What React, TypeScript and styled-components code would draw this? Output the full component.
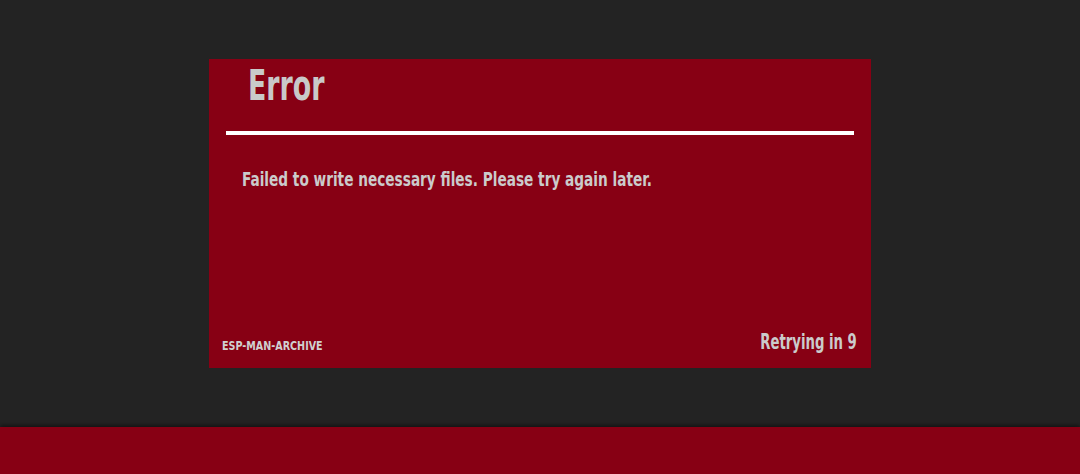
import React from "react";
import styled, { createGlobalStyle } from "styled-components";

const Global = createGlobalStyle`
  html, body { margin: 0; padding: 0; background: #232323; }
  body { font-family: "DejaVu Sans Condensed", "DejaVu Sans", "Liberation Sans", sans-serif; }
`;

const Page = styled.div`
  width: 1080px;
  height: 474px;
  display: flex;
  flex-direction: column;
  align-items: center;
  overflow: hidden;
`;

const Panel = styled.section`
  margin-top: 59px;
  width: 662px;
  height: 309px;
  background: #870014;
  display: flex;
  flex-direction: column;
  box-sizing: border-box;
  padding: 0 17px 14px;
`;

const Squeeze = styled.span<{ $x: number; $origin?: string }>`
  display: inline-block;
  white-space: nowrap;
  transform: scaleX(${(p) => p.$x});
  transform-origin: ${(p) => p.$origin ?? "left"} center;
`;

const Title = styled.h1`
  margin: 0;
  padding: 3px 0 0 22px;
  height: 66px;
  box-sizing: border-box;
  font-size: 42px;
  line-height: 48px;
  font-weight: 700;
  color: #c9c9c9;
`;

const Rule = styled.hr`
  margin: 6px 0 0;
  border: 0;
  height: 4px;
  background: #ffffff;
`;

const Message = styled.p`
  margin: 32px 0 0 16px;
  font-size: 19px;
  line-height: 24px;
  font-weight: 700;
  color: #cbcbcb;
  flex: 1;
`;

const Footer = styled.footer`
  display: flex;
  justify-content: space-between;
  align-items: flex-end;
  margin: 0 -3px 0 -4px;
`;

const Code = styled.span`
  font-size: 13px;
  font-weight: 700;
  color: #d0d0d0;
  line-height: 16px;
`;

const Retry = styled.span`
  font-size: 21px;
  font-weight: 700;
  color: #cbcbcb;
  line-height: 24px;
`;

const Band = styled.div`
  margin-top: auto;
  width: 100%;
  height: 47px;
  background: #870014;
  box-shadow: 0 -2px 4px rgba(0, 0, 0, 0.45);
`;

export default function App() {
  return (
    <>
      <Global />
      <Page>
        <Panel>
          <Title>
            <Squeeze $x={0.71}>Error</Squeeze>
          </Title>
          <Rule />
          <Message>
            <Squeeze $x={0.8}>Failed to write necessary files. Please try again later.</Squeeze>
          </Message>
          <Footer>
            <Code>
              <Squeeze $x={0.82}>ESP-MAN-ARCHIVE</Squeeze>
            </Code>
            <Retry>
              <Squeeze $x={0.7} $origin="right">Retrying in 9</Squeeze>
            </Retry>
          </Footer>
        </Panel>
        <Band />
      </Page>
    </>
  );
}
